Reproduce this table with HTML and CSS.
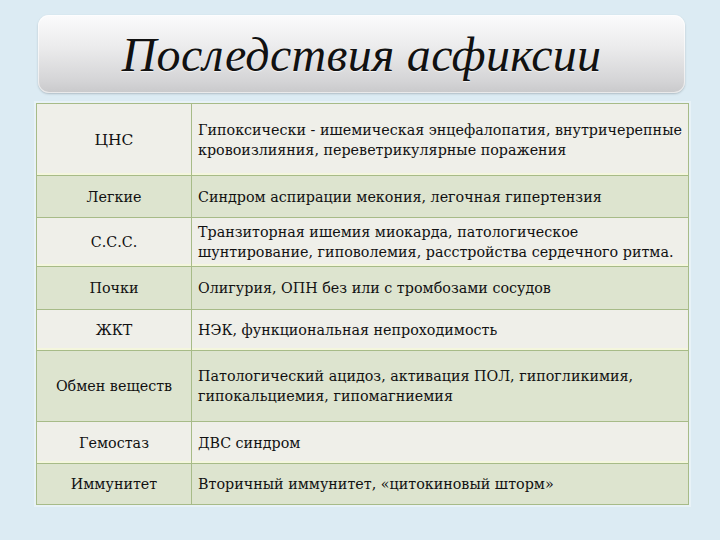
FILE: index.html
```html
<!DOCTYPE html>
<html lang="ru">
<head>
<meta charset="utf-8">
<link rel="stylesheet" href="styles.css">
</head>
<body>
<div class="slide">
  <div class="title"><h1>Последствия асфиксии</h1></div>
  <div class="table">
    <div class="row light h1"><div class="c1 big">ЦНС</div><div class="c2">Гипоксически - ишемическая энцефалопатия, внутричерепные<br>кровоизлияния, переветрикулярные поражения</div></div>
    <div class="row dark h2"><div class="c1">Легкие</div><div class="c2">Синдром аспирации мекония, легочная гипертензия</div></div>
    <div class="row light h3"><div class="c1">С.С.С.</div><div class="c2">Транзиторная ишемия миокарда, патологическое<br>шунтирование, гиповолемия, расстройства сердечного ритма.</div></div>
    <div class="row dark h4"><div class="c1">Почки</div><div class="c2">Олигурия, ОПН без или с тромбозами сосудов</div></div>
    <div class="row light h5"><div class="c1">ЖКТ</div><div class="c2">НЭК, функциональная непроходимость</div></div>
    <div class="row dark h6"><div class="c1">Обмен веществ</div><div class="c2">Патологический ацидоз, активация ПОЛ, гипогликимия,<br>гипокальциемия, гипомагниемия</div></div>
    <div class="row light h7"><div class="c1">Гемостаз</div><div class="c2">ДВС синдром</div></div>
    <div class="row dark h8 last"><div class="c1">Иммунитет</div><div class="c2">Вторичный иммунитет, «цитокиновый шторм»</div></div>
  </div>
</div>
</body>
</html>
```
FILE: styles.css
```css
html, body {
  margin: 0;
  padding: 0;
  background: #dcebf3;
}
.slide {
  width: 720px;
  height: 540px;
  padding-top: 15px;
  box-sizing: border-box;
  font-family: "DejaVu Serif", serif;
  color: #111;
}
.title {
  margin-left: 38px;
  width: 647px;
  height: 78px;
  border-radius: 11px;
  background: linear-gradient(to bottom, #fbfbfc 0%, #ececed 40%, #d4d4d6 85%, #c9c9cb 100%);
  box-shadow: 0 1px 2px rgba(120,130,140,0.45), inset 0 0 0 1px rgba(255,255,255,0.6);
  display: flex;
  align-items: center;
  justify-content: center;
}
.title h1 {
  margin: 0;
  font-family: "Liberation Serif", serif;
  font-weight: normal;
  font-style: italic;
  font-size: 48px;
  letter-spacing: 0.3px;
  color: #111;
  text-shadow: 0 1px 1px rgba(255,255,255,0.7);
}
.table {
  margin-top: 10px;
  margin-left: 36px;
  width: 653px;
  border: 1px solid #a7bb88;
  box-sizing: border-box;
  box-shadow: 0 0 0 2px rgba(255,255,255,0.35);
}
.row {
  display: grid;
  grid-template-columns: 155px 1fr;
  border-bottom: 1px solid #a7bb88;
  box-sizing: border-box;
}
.row.last { border-bottom: none; }
.row.light { background: #efefe9; box-shadow: inset 0 -2px 0 #f4f6dd; }
.row.dark { background: #dde4cf; }
.c1 {
  border-right: 1px solid #a7bb88;
  display: flex;
  align-items: center;
  justify-content: center;
  text-align: center;
  font-size: 14.3px;
}
.c1.big { font-size: 15.5px; }
.c2 {
  display: flex;
  align-items: center;
  padding: 0 4px 0 6px;
  font-size: 14.3px;
  line-height: 20px;
  white-space: nowrap;
}
.h1 { height: 72px; }
.h2 { height: 42px; }
.h3 { height: 49px; }
.h4 { height: 43px; }
.h5 { height: 41px; }
.h6 { height: 71px; }
.h7 { height: 42px; }
.h8 { height: 40px; }
```
